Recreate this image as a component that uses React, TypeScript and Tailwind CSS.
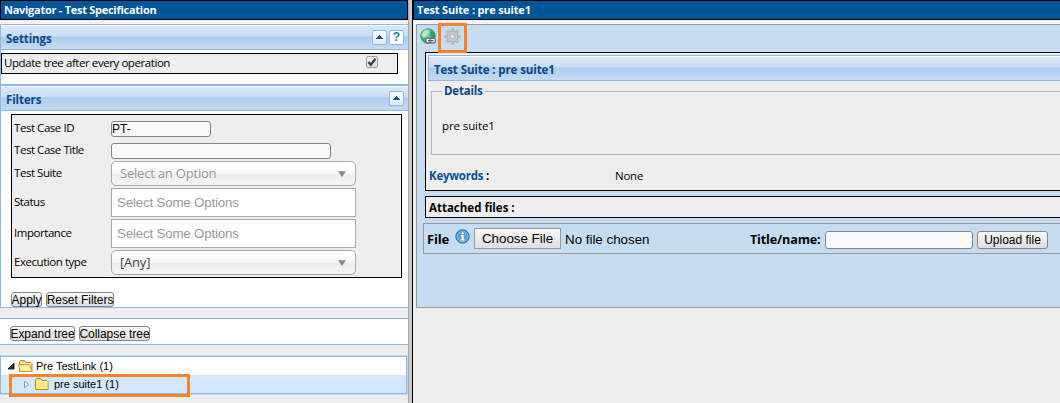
import React from "react";

const sans = "font-['Open_Sans','Noto_Sans',sans-serif]";
const arial = "font-['Liberation_Sans',Arial,sans-serif]";
const headerGradient =
  "bg-[linear-gradient(#ffffff_0,#ffffff_1px,#d8e8f9_1px,#c9def5_11px,#accded_12px,#c6dbf3_100%)]";

function UpButton() {
  return (
    <span className="flex h-[15px] w-[15px] items-center justify-center rounded-[2px] border border-[#8db8e8] bg-[linear-gradient(#ffffff,#dcecfc)]">
      <svg width="7" height="4" viewBox="0 0 7 4" shapeRendering="crispEdges">
        <path d="M3 0h1v1h1v1h1v1h1v1H0V3h1V2h1V1h1z" fill="#1f4fae" />
      </svg>
    </span>
  );
}

function PanelHeader({ title, children }: { title: string; children?: React.ReactNode }) {
  return (
    <div className={`flex h-[25px] shrink-0 items-center justify-between border-b border-[#8db8e8] pr-[4px] pl-[5px] ${headerGradient}`}>
      <span className="pt-[3px] text-[11.5px] leading-[16px] font-bold tracking-[-0.1px] text-[#0b478b]">{title}</span>
      <span className="flex gap-[2px]">{children}</span>
    </div>
  );
}

function Field({ label, height, children }: { label: string; height: string; children: React.ReactNode }) {
  return (
    <div className={`flex ${height}`}>
      <div className="w-[99px] shrink-0 pl-[2px]">
        <div className="relative top-[-1px] flex h-full items-center text-[11.5px] tracking-[-0.45px] whitespace-nowrap">{label}</div>
      </div>
      {children}
    </div>
  );
}

function Select({ text, placeholder }: { text: string; placeholder?: boolean }) {
  return (
    <div
      className={`flex w-[245px] items-center justify-between rounded-[5px] border border-[#aaaaaa] bg-[linear-gradient(#ffffff_20%,#f6f6f6_50%,#eeeeee_52%,#f4f4f4_100%)] pr-[9px] pl-[8px] text-[13px] tracking-[-0.2px] ${placeholder ? "text-[#999999]" : "text-[#444444]"}`}
    >
      <span>{text}</span>
      <svg width="8" height="6" viewBox="0 0 8 6">
        <path d="M0 .3h8L4 6z" fill="#888888" />
      </svg>
    </div>
  );
}

function MultiSelect() {
  return (
    <div className={`flex w-[245px] items-center border border-[#aaaaaa] bg-white pl-[5px] text-[13.33px] tracking-[-0.18px] text-[#999999] ${arial}`}>
      Select Some Options
    </div>
  );
}

function SmallButton({ text, width }: { text: string; width: string }) {
  return (
    <button
      className={`flex h-[15px] ${width} items-center justify-center rounded-[3px] border border-[#868686] bg-[linear-gradient(#fafafa,#dddddd)] p-0 pt-[2px] text-[12px] leading-[13px] tracking-[-0.05px] whitespace-nowrap text-black ${arial}`}
    >
      {text}
    </button>
  );
}

function Folder({ open }: { open?: boolean }) {
  return (
    <svg width="16" height="14" viewBox="0 0 16 14">
      <path d="M1.5 12.5V2.5l1-1h4l1.5 2h5l1 1v8z" fill="#fbdc70" stroke="#b8882c" />
      <path d="M2.5 4.5h10.8" stroke="#fff5b8" />
      {open ? (
        <path d="M2 12.5 .6 5.5h10.5l1 1.2L13.8 12.5z" fill="#fff0a0" stroke="#c9982f" />
      ) : (
        <path d="M2.5 5h11v7h-11z" fill="#fee985" />
      )}
    </svg>
  );
}

function GlobeLink() {
  return (
    <svg width="17" height="17" viewBox="0 0 17 17">
      <defs>
        <radialGradient id="globe" cx=".35" cy=".25" r=".8">
          <stop offset="0" stopColor="#c9f4ee" />
          <stop offset=".5" stopColor="#41b6a8" />
          <stop offset="1" stopColor="#1d7d68" />
        </radialGradient>
      </defs>
      <circle cx="8" cy="8" r="7.3" fill="url(#globe)" stroke="#35907c" strokeWidth=".8" />
      <path d="M1.5 7 4 3l4-1 1.2 2-2 1.5L6 8.5 3.5 10z" fill="#b5eba6" />
      <path d="m10.5 2.5 3.3 3 .9 4-3-.6-1.5-3z" fill="#2aa43d" />
      <path d="M2.5 11 6 10l1 4.5z" fill="#48a75a" />
      <rect x="5.8" y="10.3" width="5.4" height="4.6" rx="2" fill="#eeeeee" stroke="#666" strokeWidth="1.1" />
      <rect x="10" y="10.3" width="5.4" height="4.6" rx="2" fill="#eeeeee" stroke="#666" strokeWidth="1.1" />
      <path d="M8 12.6h5.4" stroke="#555" strokeWidth="1.1" />
    </svg>
  );
}

function Gear() {
  const teeth = [0, 45, 90, 135, 180, 225, 270, 315];
  return (
    <svg width="17" height="17" viewBox="0 0 17 17">
      {teeth.map((a) => (
        <path key={a} d="M7 3.6 7.5.8h2l.5 2.8z" fill="#cccccc" stroke="#9c9c9c" strokeWidth=".7" transform={`rotate(${a} 8.5 8.5)`} />
      ))}
      <circle cx="8.5" cy="8.5" r="5.3" fill="#cdcdcd" stroke="#adadad" strokeWidth=".7" />
      <circle cx="8.5" cy="8.5" r="2.6" fill="#dbe8f3" stroke="#999999" strokeWidth=".8" />
    </svg>
  );
}

function InfoIcon() {
  return (
    <svg width="15" height="15" viewBox="0 0 15 15">
      <circle cx="7.5" cy="7.5" r="6.7" fill="#3f84c3" stroke="#336da5" />
      <circle cx="7.5" cy="7.5" r="5.4" fill="#5e9fd6" stroke="#9dc8ea" strokeWidth=".8" />
      <path d="M6.6 3.2h2v1.7h-2zM6 6h2.6v4.2h.8v1.2H5.8v-1.2h.9V7.2H6z" fill="#fff" />
    </svg>
  );
}

function TitleBar({ text, tracking }: { text: string; tracking: string }) {
  return (
    <div className={`flex h-[20px] shrink-0 items-center border border-black bg-[#005498] pl-[3px] text-[11px] font-bold text-white ${tracking}`}>
      {text}
    </div>
  );
}

function Navigator() {
  return (
    <div className="flex w-[408px] shrink-0 flex-col bg-[#eeeeee]">
      <TitleBar text="Navigator - Test Specification" tracking="tracking-[-0.27px]" />
      <div className="h-[4px] shrink-0 bg-[#f5f1f5]" />
      <div className="flex h-[284px] shrink-0 flex-col border border-r-0 border-[#8db8e8] bg-white">
        <PanelHeader title="Settings">
          <UpButton />
          <span className={`flex h-[15px] w-[15px] items-center justify-center rounded-[2px] border border-[#8db8e8] bg-white text-[12px] font-bold text-[#2d71a6] ${arial}`}>?</span>
        </PanelHeader>
        <div className="mt-[3px] flex h-[21px] w-[397px] shrink-0 items-center justify-between border border-black bg-[#eeeeee] pr-[19px] pl-[2px] text-[11.5px] tracking-[-0.43px]">
          <span className="-mt-[1px]">Update tree after every operation</span>
          <span className="-mt-[3px] flex h-[12px] w-[12px] items-center justify-center rounded-[2px] border border-[#a0a0a0] bg-[linear-gradient(#efefef,#dcdcdc)]">
            <svg width="10" height="10" viewBox="0 0 10 10">
              <path d="m1.5 5 2.3 2.7L8.5 1.8" fill="none" stroke="#3c3c3c" strokeWidth="2.2" />
            </svg>
          </span>
        </div>
        <div className="mt-[10px] h-[2px] shrink-0 bg-[#8db8e8]" />
        <PanelHeader title="Filters">
          <UpButton />
        </PanelHeader>
        <div className="mt-[3px] ml-[10px] flex h-[164px] w-[391px] shrink-0 flex-col gap-[2px] border border-black bg-[#eeeeee] pt-[6px]">
          <Field label="Test Case ID" height="h-[16px]">
            <div className={`flex w-[100px] items-center rounded-[3px] border border-[#868686] bg-[#f9f9f9] text-[12px] ${arial}`}>PT-</div>
          </Field>
          <div className="mt-[4px] flex flex-col">
            <Field label="Test Case Title" height="h-[16px]">
              <div className="w-[220px] rounded-[3px] border border-[#868686] bg-[#f9f9f9]" />
            </Field>
          </div>
          <Field label="Test Suite" height="h-[25px]"><Select text="Select an Option" placeholder /></Field>
          <Field label="Status" height="h-[29px]"><MultiSelect /></Field>
          <Field label="Importance" height="h-[29px]"><MultiSelect /></Field>
          <Field label="Execution type" height="h-[25px]"><Select text="[Any]" /></Field>
        </div>
        <div className="mt-[14px] ml-[10px] flex gap-[4px]">
          <SmallButton text="Apply" width="w-[31px]" />
          <SmallButton text="Reset Filters" width="w-[68px]" />
        </div>
      </div>
      <div className="mt-[10px] flex h-[27px] shrink-0 gap-[4px] border-y border-[#8db8e8] bg-white pt-[7px] pl-[10px]">
        <SmallButton text="Expand tree" width="w-[65px]" />
        <SmallButton text="Collapse tree" width="w-[71px]" />
      </div>
      <div className={`relative mt-[10px] h-[40px] shrink-0 border border-l-0 border-[#b9d9f5] text-[11px] ${arial}`}>
        <div className="h-[38px] border border-[#8db8e8] bg-white">
          <div className="flex h-[18px] items-center pl-[6px]">
            <svg width="8" height="8" viewBox="0 0 8 8"><path d="M7 1v6H1z" fill="#333" stroke="#222" /></svg>
            <span className="ml-[3px]"><Folder open /></span>
            <span className="ml-[2px]">Pre TestLink (1)</span>
          </div>
          <div className="flex h-[18px] items-center bg-[#d3e8fc] pl-[22px]">
            <svg width="7" height="9" viewBox="0 0 7 9"><path d="M1.5 1.2v6.6L5.7 4.5z" fill="#fff" stroke="#999" /></svg>
            <span className="ml-[4px]"><Folder /></span>
            <span className="ml-[4px]">pre suite1 (1)</span>
          </div>
        </div>
        <div className="absolute top-[18px] left-[9px] h-[23px] w-[181px] border-[3px] border-[#fd8127]" />
      </div>
    </div>
  );
}

function Suite() {
  return (
    <div className="flex min-w-0 flex-1 flex-col overflow-hidden border-l border-black bg-[#eeeeee]">
      <div className="-mr-px flex flex-col"><TitleBar text="Test Suite : pre suite1" tracking="tracking-[-0.17px]" /></div>
      <div className="h-[4px] shrink-0 bg-[#f5f1f5]" />
      <div className="ml-[3px] flex h-[284px] shrink-0 flex-col border border-r-0 border-[#999999] bg-[#c6dcf0]">
        <div className="relative h-[27px] shrink-0 pt-[3px] pl-[3px]">
          <GlobeLink />
          <div className="absolute top-[-2px] left-[21px] z-10 flex h-[30px] w-[29px] items-start justify-center border-[3px] border-[#fd8127] pt-[2px]">
            <Gear />
          </div>
        </div>
        <div className="ml-[8px] flex h-[139px] shrink-0 flex-col border border-r-0 border-black bg-[#eeeeee] pt-[2px] pl-[2px]">
          <div className={`flex h-[26px] shrink-0 items-center border border-r-0 border-[#8db8e8] pl-[5px] text-[11.5px] font-bold tracking-[-0.1px] text-[#0b478b] ${headerGradient}`}>
            <span className="mt-[3px]">Test Suite : pre suite1</span>
          </div>
          <fieldset className="mt-[1px] ml-[3px] h-[73px] shrink-0 border border-r-0 border-[#b3b3c3] pl-[10px]">
            <legend className="h-[18px] px-[2px] text-[11.5px] leading-[18px] font-bold tracking-[-0.2px] text-[#0b478b]">Details</legend>
            <div className="mt-[17px] text-[11.5px] leading-[18px] tracking-[-0.1px]">pre suite1</div>
          </fieldset>
          <div className="mt-[12px] flex pl-px text-[11.5px] leading-[18px] tracking-[-0.25px]">
            <span className="w-[186px] font-bold"><span className="text-[#005498]">Keywords</span> :</span>
            <span>None</span>
          </div>
        </div>
        <div className="mt-[5px] ml-[8px] flex h-[22px] shrink-0 items-center border border-r-0 border-black bg-[#eeeeee] pt-px pl-[3px] text-[11.5px] font-bold">
          Attached files :
        </div>
        <div className="mt-[5px] ml-[6px] flex h-[31px] shrink-0 items-center border border-r-0 border-[#999999] pl-[3px] text-[12.5px]">
          <span className="w-[28px] pt-[3px] text-[13px] font-bold tracking-[-0.2px]">File</span>
          <span className="-mt-[5px]"><InfoIcon /></span>
          <button className={`ml-[4px] flex h-[21px] w-[87px] items-center justify-center border border-[#999999] bg-[linear-gradient(#f8f8f8,#dedede)] p-0 pt-px text-[13.33px] whitespace-nowrap ${arial}`}>Choose File</button>
          <span className={`ml-[4px] w-[185px] pt-[2px] text-[13.33px] ${arial}`}>No file chosen</span>
          <span className="w-[75px] pt-[3px] font-bold tracking-[-0.12px] whitespace-nowrap">Title/name:</span>
          <div className="mt-[3px] h-[18px] w-[148px] rounded-[3px] border border-[#868686] bg-[#f9f9f9]" />
          <button className={`mt-[3px] ml-[4px] flex h-[18px] w-[71px] items-center justify-center rounded-[3px] border border-[#868686] bg-[linear-gradient(#fafafa,#dddddd)] p-0 text-[12px] whitespace-nowrap ${arial}`}>Upload file</button>
        </div>
      </div>
    </div>
  );
}

export default function App() {
  return (
    <div className={`flex h-[403px] w-[1060px] overflow-hidden text-black ${sans}`}>
      <Navigator />
      <div className="w-[4px] shrink-0 border-l border-[#aaaaaa] bg-[#cccccc]" />
      <Suite />
    </div>
  );
}
